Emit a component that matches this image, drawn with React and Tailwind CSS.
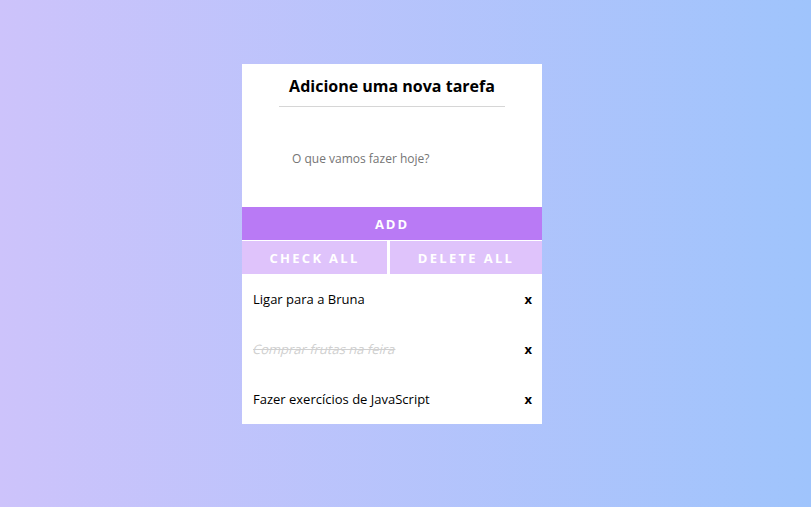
export default function App() {
  const items = [
    { t: "Ligar para a Bruna", done: false },
    { t: "Comprar frutas na feira", done: true },
    { t: "Fazer exercícios de JavaScript", done: false },
  ];
  return (
    <div
      className="w-[811px] h-[507px] flex justify-center items-start pt-[64px] pr-[27px] bg-[linear-gradient(to_right,#cdc3fb,#9fc4fc)]"
      style={{ fontFamily: '"Open Sans", sans-serif' }}
    >
      <div className="w-[300px] bg-white flex flex-col">
        <div className="h-[42px] flex items-center justify-center pt-[1px]">
          <h1 className="text-[16px] font-bold text-black">Adicione uma nova tarefa</h1>
        </div>
        <div className="mx-auto w-[226px] h-px bg-[#d6d6d6]" />
        <div className="h-[100px] flex items-center pl-[50px] pt-[3px]">
          <input
            className="w-full outline-none text-[12px] text-black placeholder:text-[#757575]"
            placeholder="O que vamos fazer hoje?"
          />
        </div>
        <button className="h-[33px] pt-[2px] bg-[#b97af5] text-white text-[13px] font-bold tracking-[2px] flex items-center justify-center">
          ADD
        </button>
        <div className="flex mt-px h-[33px]">
          <button className="w-[145px] pt-[2px] bg-[#dfc3fb] text-white text-[13px] font-bold tracking-[2.3px] flex items-center justify-center">
            CHECK ALL
          </button>
          <div className="w-[3px] bg-white" />
          <button className="flex-1 pt-[2px] bg-[#dfc3fb] text-white text-[13px] font-bold tracking-[2.3px] flex items-center justify-center">
            DELETE ALL
          </button>
        </div>
        {items.map((it) => (
          <div key={it.t} className="h-[50px] pt-[2px] flex items-center justify-between pl-[11px] pr-[10px]">
            <span
              className={
                it.done
                  ? "inline-block skew-x-[-14deg] text-[13px] line-through text-[#d0d0d0]"
                  : "text-[13px] text-black"
              }
            >
              {it.t}
            </span>
            <span className="text-[13px] font-bold text-black">x</span>
          </div>
        ))}
      </div>
    </div>
  );
}
